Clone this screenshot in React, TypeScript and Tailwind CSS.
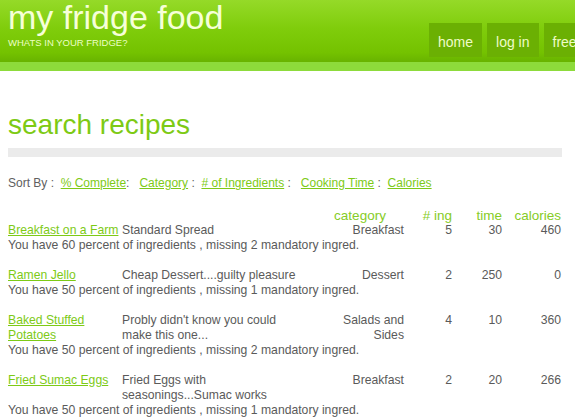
import React from "react";

type Recipe = {
  name: string;
  desc: string;
  category: string;
  ing: number;
  time: number;
  calories: number;
  percent: number;
  missing: number;
};

const recipes: Recipe[] = [
  { name: "Breakfast on a Farm", desc: "Standard Spread", category: "Breakfast", ing: 5, time: 30, calories: 460, percent: 60, missing: 2 },
  { name: "Ramen Jello", desc: "Cheap Dessert....guilty pleasure", category: "Dessert", ing: 2, time: 250, calories: 0, percent: 50, missing: 1 },
  { name: "Baked Stuffed Potatoes", desc: "Probly didn't know you could make this one...", category: "Salads and Sides", ing: 4, time: 10, calories: 360, percent: 50, missing: 2 },
  { name: "Fried Sumac Eggs", desc: "Fried Eggs with seasonings...Sumac works", category: "Breakfast", ing: 2, time: 20, calories: 266, percent: 50, missing: 1 },
  { name: "Green Smoothie", desc: "Healthy start", category: "Drinks", ing: 3, time: 5, calories: 120, percent: 40, missing: 2 },
];

const sortLinks = ["% Complete", "Category", "# of Ingredients", "Cooking Time", "Calories"];
const seps = [":\u00a0\u00a0\u00a0", "\u00a0:\u00a0\u00a0", "\u00a0:\u00a0\u00a0\u00a0", "\u00a0:\u00a0\u00a0", ""];

export default function App() {
  return (
    <div className="h-[417px] w-[575px] overflow-hidden bg-white font-['Liberation_Sans',Arial,sans-serif]">
      {/* header */}
      <header className="flex h-[62px] bg-[linear-gradient(to_bottom,#95da28_0%,#80cd0c_45%,#74c200_85%,#68b300_100%)]">
        <div className="w-[429px] shrink-0 pl-[8px]">
          <h1 className="text-[34px] leading-[34px] text-[#f6ffd8]">my fridge food</h1>
          <p className="mt-[3px] text-[9.5px] leading-[12px] text-[#ecffc4]">WHATS IN YOUR FRIDGE?</p>
        </div>
        <nav className="flex gap-[5px] whitespace-nowrap pt-[23px]">
          {["home", "log in", "free recipes"].map((item) => (
            <a
              key={item}
              className="h-[34px] bg-[#6bb003] px-[9px] pt-[9px] text-[14px] leading-[20px] text-[#effcc8]"
            >
              {item}
            </a>
          ))}
        </nav>
      </header>
      <div className="h-[9px] bg-[#8ddb3b]" />

      <main className="px-[8px]">
        <h2 className="mt-[38px] text-[28px] leading-[32px] text-[#7dca14]">search recipes</h2>
        <div className="mt-[7px] h-[9px] w-[554px] bg-[#ebebeb]" />

        <p className="mt-[19px] whitespace-nowrap text-[12px] leading-[15px] text-[#606060]">
          Sort By :{"\u00a0\u00a0"}
          {sortLinks.map((l, i) => (
            <React.Fragment key={l}>
              <a className="text-[#7dca16] underline">{l}</a>
              {seps[i]}
            </React.Fragment>
          ))}
        </p>

        <div className="mt-[17px] grid grid-cols-[114px_178px_104px_48px_50px_59px] text-[12.2px] leading-[15px] text-[#5a5a5a]">
          <div />
          <div />
          <div className="pl-[16px] text-center text-[13.5px] text-[#86cc26]">category</div>
          <div className="text-right text-[13.5px] text-[#86cc26]"># ing</div>
          <div className="text-right text-[13.5px] text-[#86cc26]">time</div>
          <div className="text-right text-[13.5px] text-[#86cc26]">calories</div>

          {recipes.map((r, i) => (
            <React.Fragment key={r.name}>
              <div className={i > 0 ? "mt-[15px]" : ""}>
                <a className="text-[#7dca16] underline">{r.name}</a>
              </div>
              <div className={i > 0 ? "mt-[15px]" : ""}>{r.desc}</div>
              <div className={`${i > 0 ? "mt-[15px]" : ""} pl-[16px] text-right`}>{r.category}</div>
              <div className={`${i > 0 ? "mt-[15px]" : ""} text-right`}>{r.ing}</div>
              <div className={`${i > 0 ? "mt-[15px]" : ""} text-right`}>{r.time}</div>
              <div className={`${i > 0 ? "mt-[15px]" : ""} text-right`}>{r.calories}</div>
              <div className="col-span-6 whitespace-nowrap">
                You have {r.percent} percent of ingredients , missing {r.missing} mandatory ingred.
              </div>
            </React.Fragment>
          ))}
        </div>
      </main>
    </div>
  );
}
